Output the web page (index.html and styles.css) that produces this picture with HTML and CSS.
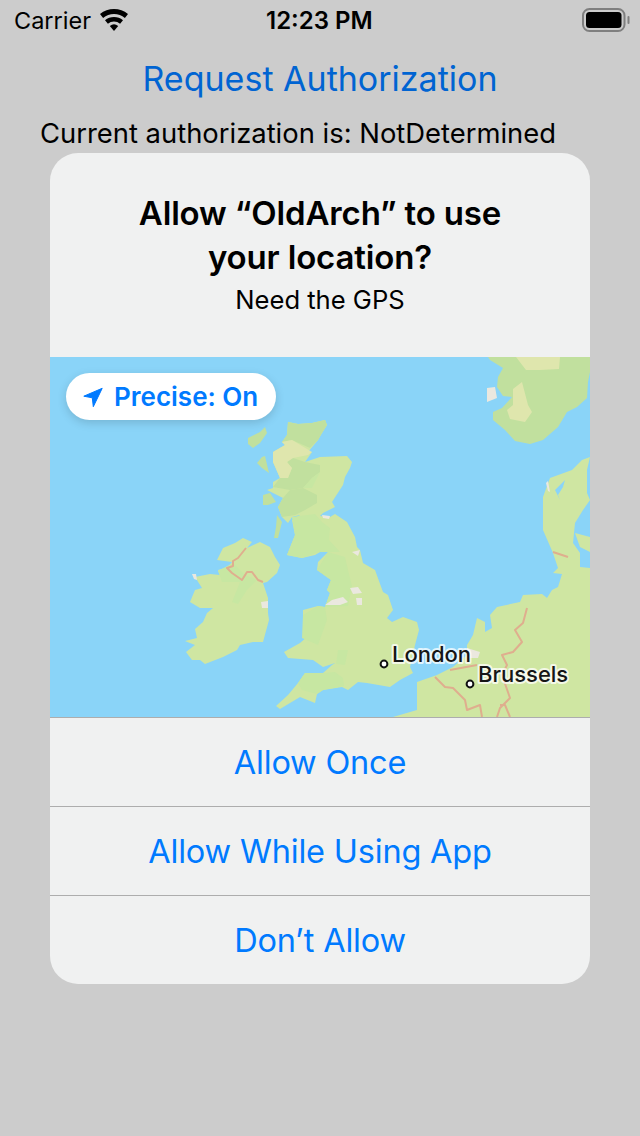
FILE: index.html
```html
<!DOCTYPE html>
<html>
<head>
<meta charset="UTF-8">
<title>Location permission</title>
<link rel="stylesheet" href="styles.css">
</head>
<body>
<div class="statusbar">
  <div class="status-left">
    <span class="carrier">Carrier</span>
    <svg class="wifi" viewBox="0 0 28 22" width="28" height="22">
      <path d="M0 5.1A22 22 0 0 1 28 5.1L24.9 9A17 17 0 0 0 3.1 9Z"/>
      <path d="M5 11.3A14 14 0 0 1 23 11.3L20.1 14.7A9.5 9.5 0 0 0 7.9 14.7Z"/>
      <path d="M9.8 17A6.5 6.5 0 0 1 18.2 17L14 22Z"/>
    </svg>
  </div>
  <span class="clock">12:23 PM</span>
  <svg class="battery" viewBox="0 0 48 24" width="48" height="24">
    <rect x="1" y="1" width="41.5" height="22" rx="6.5" fill="none" stroke="#7f7f7f" stroke-width="2"/>
    <rect x="4" y="4" width="35.5" height="16" rx="3.5" fill="#000"/>
    <rect x="45.5" y="8" width="2" height="8" rx="1" fill="#7f7f7f"/>
  </svg>
</div>

<div class="request">Request Authorization</div>
<div class="current">Current authorization is: NotDetermined</div>

<div class="alert">
  <div class="alert-head">
    <div class="alert-title">Allow “OldArch” to use<br>your location?</div>
    <div class="alert-msg">Need the GPS</div>
  </div>
  <div class="map">
    <svg class="map-art" viewBox="50 357 540 360" width="540" height="360">
      <!-- norway -->
      <path class="land-mid" d="M488 357L590 357L590 372L588 382L587 398L577 407L567 412L558 427L543 440L530 444L515 441L505 430L493 420L493 412L502 408L512 397L503 396L497 387L498 377L503 368L490 360Z"/>
      <path class="land-tan" d="M516 357L560 357L559 369L540 370L526 370ZM513 389L522 382L528 405L532 412L525 422L510 419L507 410L513 405Z"/>
      <path class="urban" d="M487 388L495 387L497 398L487 402Z"/>

      <!-- ireland -->
      <path class="land" d="M217 560L223 548L235 543L243 538L252 542L247 548L260 542L270 547L275 557L280 565L277 573L267 582L263 583L268 598L268 613L269 620L263 642L253 642L240 645L237 650L223 657L205 664L200 660L192 660L186 652L195 645L185 641L197 638L195 629L203 622L207 613L213 608L200 608L190 602L195 590L202 588L195 577L210 574L220 575L218 570L228 567L232 562Z"/>
      <path class="land-bright" d="M218 571L233 563L245 575L257 580L247 590L238 604L232 602L240 582L222 582Z"/>
      <path class="urban" d="M192 574L196 574L197 580L194 579ZM261 602L268 601L268 608L262 608Z"/>
      <path class="border" d="M246 548L238 558L233 561L233 566L227 568L232 573L242 580L247 572L252 572L258 580L263 582"/>

      <!-- scottish islands -->
      <path class="land-mid" d="M248 438L260 432L265 427L267 433L260 443L253 448L248 444ZM262 457L265 456L269 473L262 468L257 463ZM263 495L270 493L276 502L268 505L263 505Z"/>

      <!-- great britain -->
      <path class="land" d="M288 422L298 424L312 423L325 420L327 425L322 433L318 440L308 452L312 452L305 462L320 457L347 456L352 462L350 468L345 477L343 485L332 502L335 507L323 513L320 516L330 517L335 514L347 522L355 537L357 547L360 550L363 563L375 570L383 592L388 595L393 610L387 618L392 622L403 617L417 622L419 630L415 645L410 667L413 673L400 680L390 687L367 683L358 682L348 690L342 687L323 690L317 694L315 703L300 697L290 703L280 709L276 706L288 695L298 683L305 673L323 673L332 665L335 663L323 667L313 660L288 658L284 652L300 643L308 636L308 628L303 615L303 610L318 606L325 607L330 593L327 590L331 580L317 570L318 562L328 552L320 552L315 555L302 558L287 555L295 535L292 520L300 515L292 517L288 523L282 517L278 507L283 498L267 490L273 488L273 482L280 478L273 462L273 452L285 445L282 442L287 435Z"/>
      <path class="land-mid" d="M288 422L298 424L312 423L325 420L327 425L322 433L318 440L310 448L292 440L282 442L287 435ZM287 462L293 458L305 462L320 465L320 472L312 478L303 488L290 490L273 487L280 478L288 478L292 468Z"/>
      <path class="land-tan" d="M282 442L292 440L312 452L308 455L293 458L287 462L292 468L288 478L280 478L273 462L273 452L285 445Z"/>
      <path class="land-bright" d="M312 478L320 472L312 488L303 488Z"/>
      <path class="land-mid" d="M278 507L283 498L290 490L303 488L317 495L317 503L305 510L295 515L282 517Z"/>
      <path class="land-bright" d="M292 517L315 514L322 522L330 528L329 540L340 552L320 552L302 558L287 555L295 535Z"/>
      <path class="land-mid" d="M277 515L282 522L278 538L274 538L276 527Z"/>
      <path class="land-bright" d="M317 570L328 552L345 557L348 570L352 586L348 606L325 607L330 593L327 590L331 580Z"/>
      <path class="land-bright" d="M318 606L325 607L327 620L318 645L302 638L303 615ZM338 650L348 650L345 665L336 664ZM305 673L323 673L335 672L343 678L344 686L323 690L317 694L302 690L298 683Z"/>
      <path class="urban" d="M325 605L332 600L343 597L348 602L340 605ZM350 588L358 587L362 593L353 594ZM356 598L362 598L362 605L357 605ZM352 552L360 550L358 556ZM322 515L330 516L329 519L323 518Z"/>

      <!-- mainland -->
      <path class="land" d="M393 717L417 710L417 682L437 675L453 667L467 655L467 645L473 635L477 618L485 622L485 632L492 628L490 615L497 607L520 602L523 595L542 594L547 598L552 590L558 587L562 574L553 573L558 568L553 553L543 530L543 497L550 478L572 470L582 460L590 457L587 470L587 493L590 500L583 510L575 523L573 543L580 553L580 567L590 568L590 717Z"/>
      <path class="land" d="M575 533L590 537L590 552L580 547Z"/>
      <path class="water" d="M555 490L565 480L563 487L558 495L560 500Z"/>
      <path class="urban" d="M467 648L480 652L478 658L467 658ZM546 483L548 481L550 492L548 491Z"/>
      <path class="border" d="M527 608L523 623L515 630L522 642L513 652L502 655L507 665L502 675L510 698L500 708L497 717M435 677L445 687L453 688L465 700L467 710L480 705L482 717M450 670L477 665M500 705L505 705L510 717M553 552L568 557"/>

      <!-- cities -->
      <circle class="city" cx="384" cy="664" r="3.4"/>
      <circle class="city" cx="470" cy="684" r="3.4"/>
      <text class="city-name" x="392" y="662">London</text>
      <text class="city-name" x="478" y="682">Brussels</text>
    </svg>
    <div class="precise">
      <svg class="arrow" viewBox="0 0 22 22" width="22" height="22">
        <path d="M1.8 10.2L20.2 2.3L11.3 20.7L10.3 11.8Z"/>
      </svg>
      <span>Precise: On</span>
    </div>
  </div>
  <div class="alert-btn">Allow Once</div>
  <div class="alert-btn">Allow While Using App</div>
  <div class="alert-btn">Don’t Allow</div>
</div>
</body>
</html>
```

FILE: styles.css
```css
html, body {
  margin: 0;
  padding: 0;
}
body {
  width: 640px;
  height: 1136px;
  overflow: hidden;
  background: #cccccc;
  color: #000;
  font-family: Inter, "Noto Sans", sans-serif;
}

.statusbar {
  height: 40px;
  padding: 0 10px 0 14px;
  display: flex;
  align-items: center;
  justify-content: space-between;
  position: relative;
}
.status-left {
  display: flex;
  align-items: center;
  gap: 9px;
}
.carrier {
  font-size: 23.5px;
}
.clock {
  font-size: 24px;
  font-weight: 600;
  position: absolute;
  left: 266px;
}
.wifi {
  fill: #000;
}

.request {
  margin-top: 17px;
  height: 44px;
  line-height: 44px;
  text-align: center;
  font-size: 34px;
  color: #0064d2;
}
.current {
  margin-top: 16px;
  padding-left: 40px;
  height: 34px;
  line-height: 33px;
  font-size: 27.4px;
}

.alert {
  margin: 2px 50px 0;
  width: 540px;
  background: #f0f1f1;
  border-radius: 28px;
  overflow: hidden;
}
.alert-head {
  height: 204px;
  box-sizing: border-box;
  padding-top: 38px;
  text-align: center;
}
.alert-title {
  font-size: 33px;
  line-height: 44px;
  font-weight: 600;
  letter-spacing: -0.15px;
}
.alert-msg {
  margin-top: 1px;
  font-size: 25.6px;
  line-height: 40px;
}

.map {
  position: relative;
  height: 360px;
  background: #8ad4f8;
}
.map-art {
  display: block;
}
.land { fill: #cfe6a2; }
.land-mid { fill: #c1e09e; }
.land-bright { fill: #c7e7a2; }
.land-tan { fill: #dfe6ad; }
.urban { fill: #ebe8df; }
.water { fill: #8ad4f8; }
.border {
  fill: none;
  stroke: #dfae8e;
  stroke-width: 2;
  stroke-linejoin: round;
}
.city {
  fill: #fff;
  stroke: #111;
  stroke-width: 2;
}
.city-name {
  font-family: Inter, "Noto Sans", sans-serif;
  font-size: 22px;
  font-weight: 500;
  fill: #161616;
  stroke: rgba(255, 255, 255, 0.75);
  stroke-width: 4px;
  stroke-linejoin: round;
  paint-order: stroke;
}

.precise {
  position: absolute;
  left: 16px;
  top: 16px;
  width: 210px;
  height: 47px;
  box-sizing: border-box;
  padding-left: 16px;
  display: flex;
  align-items: center;
  gap: 10px;
  background: #fff;
  border-radius: 24px;
  box-shadow: 0 3px 10px rgba(0, 0, 0, 0.15);
  color: #007aff;
  font-size: 26px;
  font-weight: 600;
}
.arrow {
  fill: #007aff;
  stroke: #007aff;
  stroke-width: 1;
  stroke-linejoin: round;
}

.alert-btn {
  height: 88px;
  line-height: 90px;
  border-top: 1px solid #adadad;
  text-align: center;
  font-size: 32.5px;
  letter-spacing: -0.2px;
  color: #007aff;
}
```
